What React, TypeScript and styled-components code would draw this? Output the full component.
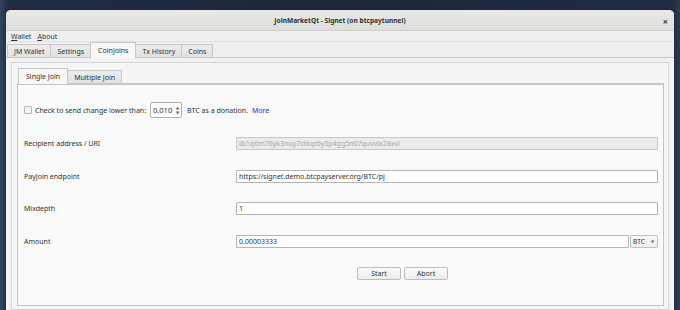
import React, { useState } from 'react';
import styled, { createGlobalStyle } from 'styled-components';

const GlobalStyle = createGlobalStyle`
  html, body {
    margin: 0;
    padding: 0;
  }
  body {
    font-family: "Noto Sans", "DejaVu Sans", sans-serif;
    font-size: 7px;
    color: #2e3436;
  }
`;

const Desktop = styled.div`
  width: 680px;
  height: 310px;
  overflow: hidden;
  box-sizing: border-box;
  padding: 10px 6px 0 6px;
  background: linear-gradient(90deg, #34445f 0px, #1f2b40 8px, #1c2739 50%, #1f2b40 calc(100% - 8px), #2c3a54 100%);
`;

const Window = styled.div`
  height: 100%;
  display: flex;
  flex-direction: column;
  background: #efefef;
  border-radius: 5px 5px 0 0;
  overflow: hidden;
`;

const TitleBar = styled.div`
  height: 20px;
  flex: none;
  display: flex;
  align-items: center;
  justify-content: center;
  position: relative;
  background: linear-gradient(#e9e9e7, #dddddb);
  border-bottom: 1px solid #cfcfcd;
  font-weight: 700;
  font-size: 6.6px;
  color: #2e3436;
`;

const CloseButton = styled.span`
  position: absolute;
  right: 6px;
  top: 5px;
  font-size: 9px;
  font-weight: 700;
  color: #3a3a3a;
`;

const MenuBar = styled.div`
  height: 10px;
  flex: none;
  display: flex;
  align-items: center;
  gap: 6px;
  padding: 0 5px;
  background: #efefef;
  border-bottom: 1px solid #e2e2e2;
`;

const MenuItem = styled.span`
  u {
    text-decoration: underline;
  }
`;

const TabBar = styled.div<{ $inset?: number }>`
  display: flex;
  align-items: flex-end;
  flex: none;
  padding-left: ${(p) => p.$inset ?? 1}px;
  border-bottom: 1px solid #c8c8c8;
  height: 15px;
`;

const Tab = styled.div<{ $active?: boolean }>`
  box-sizing: border-box;
  display: flex;
  align-items: center;
  padding: 0 ${(p) => (p.$active ? 7 : 6)}px;
  border: 1px solid #c8c8c8;
  border-bottom: none;
  margin-right: -1px;
  background: ${(p) => (p.$active ? '#f7f7f7' : 'linear-gradient(#ececec, #e2e2e2)')};
  margin-bottom: ${(p) => (p.$active ? '-1px' : '0')};
  height: ${(p) => (p.$active ? '16px' : '13px')};
  position: relative;
  z-index: ${(p) => (p.$active ? 1 : 0)};
`;

const OuterPane = styled.div`
  flex: 1;
  display: flex;
  padding: 4px 5px 0 5px;
  background: #f2f2f2;
`;

const Frame = styled.div`
  flex: 1;
  display: flex;
  flex-direction: column;
  border: 1px solid #d4d4d4;
  padding: 5px 4px 3px 5px;
  background: #f5f5f5;
`;

const InnerPane = styled.div`
  flex: 1;
  border: 1px solid #c4c4c4;
  background: #fafafa;
  padding: 17px 5px 0 6px;
`;

const DonationRow = styled.div`
  display: flex;
  align-items: center;
  height: 16px;
  margin-bottom: 19px;
`;

const Checkbox = styled.span`
  width: 8px;
  height: 8px;
  box-sizing: border-box;
  border: 1px solid #b8b8b8;
  border-radius: 1px;
  background: #f4f4f4;
  margin-right: 3px;
`;

const SpinBox = styled.div`
  display: flex;
  align-items: center;
  height: 16px;
  width: 32px;
  box-sizing: border-box;
  border: 1px solid #b0b0b0;
  border-radius: 2px;
  background: #ffffff;
  margin: 0 5px 0 4px;
  padding-left: 2px;
  font-size: 7.5px;
`;

const SpinArrows = styled.span`
  margin-left: auto;
  width: 7px;
  display: flex;
  flex-direction: column;
  align-items: center;
  justify-content: center;
  gap: 1px;
  font-size: 4px;
  line-height: 4px;
  color: #555;
`;

const Link = styled.a`
  color: #2a2ad8;
  margin-left: 4px;
  text-decoration: none;
`;

const FormGrid = styled.div`
  display: grid;
  grid-template-columns: 212px 1fr;
  grid-auto-rows: 32.5px;
  align-items: start;
`;

const Label = styled.div`
  height: 13px;
  display: flex;
  align-items: center;
`;

const FieldRow = styled.div`
  display: flex;
`;

const Field = styled.div<{ $disabled?: boolean }>`
  flex: 1;
  height: 13px;
  box-sizing: border-box;
  display: flex;
  align-items: center;
  padding-left: 2px;
  border: 1px solid ${(p) => (p.$disabled ? '#c8c8c8' : '#b4b4b4')};
  border-radius: 1px;
  background: ${(p) => (p.$disabled ? '#ebebeb' : '#ffffff')};
  color: ${(p) => (p.$disabled ? '#a8a8a8' : '#2e3436')};
`;

const Combo = styled.div`
  width: 28px;
  height: 13px;
  box-sizing: border-box;
  margin-left: 1px;
  display: flex;
  align-items: center;
  justify-content: space-between;
  padding: 0 3px 0 2px;
  border: 1px solid #c0c0c0;
  border-radius: 2px;
  background: linear-gradient(#f8f8f8, #ececec);
  font-size: 6.5px;
`;

const Caret = styled.span`
  font-size: 4px;
  color: #666;
`;

const ButtonRow = styled.div`
  display: flex;
  justify-content: center;
  gap: 3px;
  padding-left: 123px;
`;

const Button = styled.button`
  width: 44px;
  height: 13px;
  padding: 0;
  font-family: inherit;
  font-size: 7px;
  color: #2e3436;
  border: 1px solid #bdbdbd;
  border-radius: 2px;
  background: linear-gradient(#fbfbfb, #ececec);
`;

export default function App() {
  const [outerTab, setOuterTab] = useState('Coinjoins');
  const [innerTab, setInnerTab] = useState('Single Join');

  return (
    <>
      <GlobalStyle />
      <Desktop>
        <Window>
          <TitleBar>
            JoinMarketQt - Signet (on btcpaytunnel)
            <CloseButton>×</CloseButton>
          </TitleBar>
          <MenuBar>
            <MenuItem><u>W</u>allet</MenuItem>
            <MenuItem><u>A</u>bout</MenuItem>
          </MenuBar>
          <TabBar>
            {['JM Wallet', 'Settings', 'Coinjoins', 'Tx History', 'Coins'].map((t) => (
              <Tab key={t} $active={t === outerTab} onClick={() => setOuterTab(t)}>
                {t}
              </Tab>
            ))}
          </TabBar>
          <OuterPane>
            <Frame>
              <TabBar $inset={1}>
                {['Single Join', 'Multiple Join'].map((t) => (
                  <Tab key={t} $active={t === innerTab} onClick={() => setInnerTab(t)}>
                    {t}
                  </Tab>
                ))}
              </TabBar>
              <InnerPane>
                <DonationRow>
                  <Checkbox />
                  Check to send change lower than:
                  <SpinBox>
                    0.010
                    <SpinArrows>
                      <span>▲</span>
                      <span>▼</span>
                    </SpinArrows>
                  </SpinBox>
                  BTC as a donation.
                  <Link href="#">More</Link>
                </DonationRow>
                <FormGrid>
                  <Label>Recipient address / URI</Label>
                  <Field $disabled>tb1q6m76yk3nuy7ctkqt6y5p4gg5n07quvvlx28xvl</Field>
                  <Label>PayJoin endpoint</Label>
                  <Field>https://signet.demo.btcpayserver.org/BTC/pj</Field>
                  <Label>Mixdepth</Label>
                  <Field>1</Field>
                  <Label>Amount</Label>
                  <FieldRow>
                    <Field>0.00003333</Field>
                    <Combo>
                      BTC
                      <Caret>▼</Caret>
                    </Combo>
                  </FieldRow>
                </FormGrid>
                <ButtonRow>
                  <Button>Start</Button>
                  <Button>Abort</Button>
                </ButtonRow>
              </InnerPane>
            </Frame>
          </OuterPane>
        </Window>
      </Desktop>
    </>
  );
}
